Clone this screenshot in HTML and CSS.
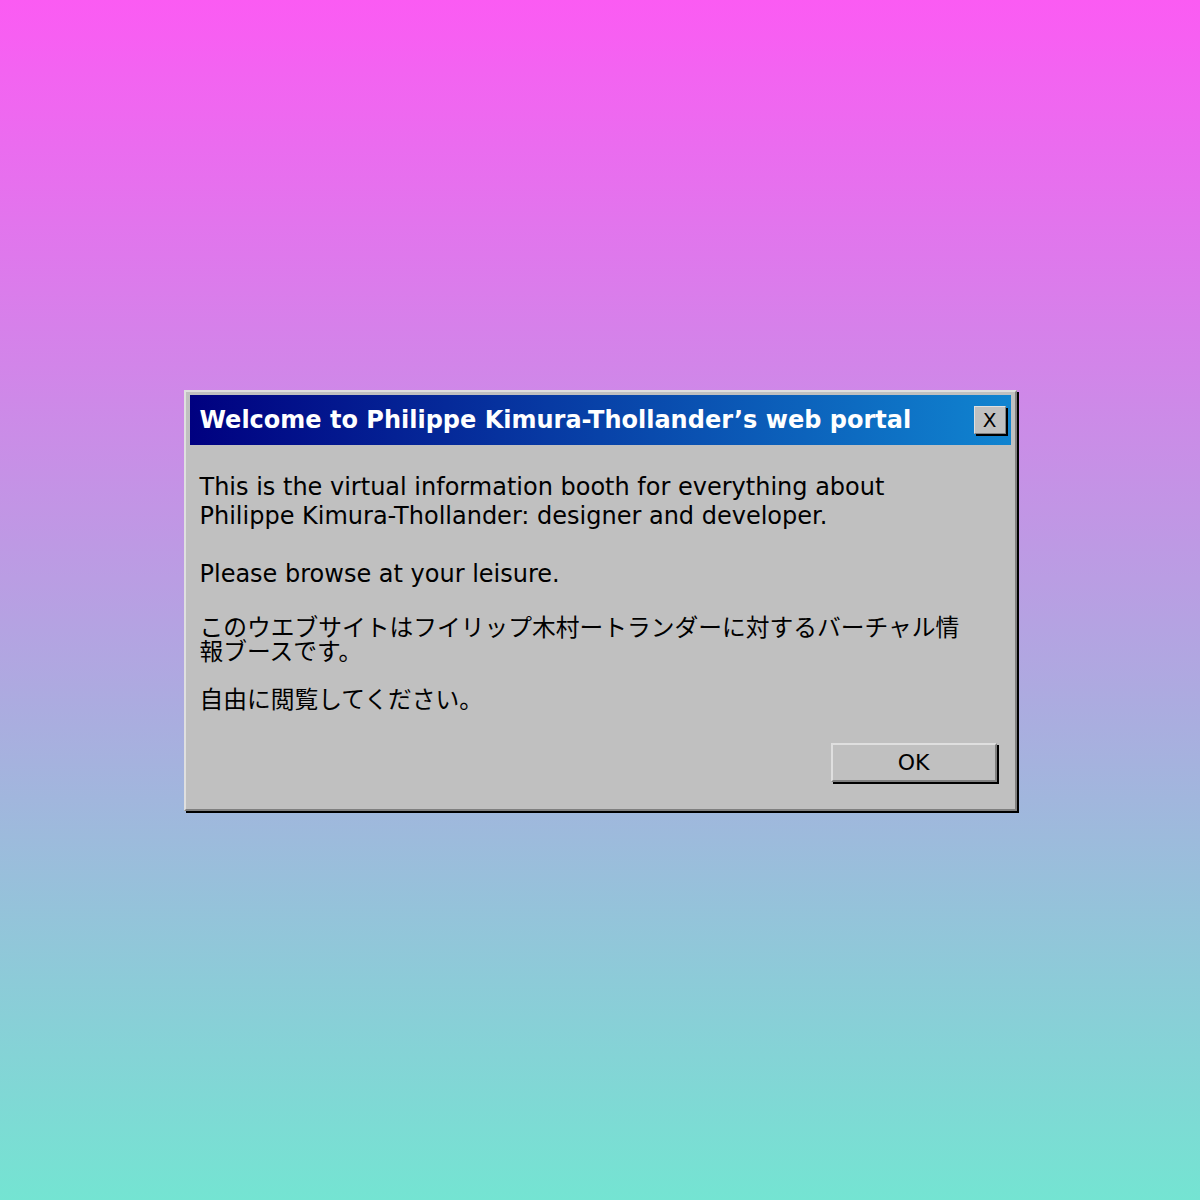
FILE: index.html
```html
<!DOCTYPE html>
<html lang="en">
<head>
<meta charset="utf-8">
<title>Philippe Kimura-Thollander</title>
<link rel="stylesheet" href="styles.css">
</head>
<body>
<div class="window">
  <div class="titlebar">
    <span class="title">Welcome to Philippe Kimura-Thollander’s web portal</span>
    <button class="close" type="button">X</button>
  </div>
  <div class="content">
    <p class="en">This is the virtual information booth for everything about Philippe Kimura-Thollander: designer and developer.</p>
    <p class="en en-last">Please browse at your leisure.</p>
    <p class="ja" lang="ja">このウエブサイトはフイリップ木村ートランダーに対するバーチャル情報ブースです。</p>
    <p class="ja ja-last" lang="ja">自由に閲覧してください。</p>
    <div class="actions">
      <button class="ok" type="button">OK</button>
    </div>
  </div>
</div>
</body>
</html>
```

FILE: styles.css
```css
html, body {
  margin: 0;
  padding: 0;
}
body {
  min-height: 1200px;
  display: flex;
  align-items: center;
  justify-content: center;
  background: linear-gradient(to bottom, #fb5bf3 0%, #74e4d2 100%);
  font-family: "DejaVu Sans", "Noto Sans CJK JP", sans-serif;
}
.window {
  width: 833px;
  box-sizing: border-box;
  background: #c0c0c0;
  border: 2px solid;
  border-color: #dfdfdf #808080 #808080 #dfdfdf;
  box-shadow: 2px 2px 0 #000;
  padding: 3px 4px 4px 4px;
}
.titlebar {
  height: 50px;
  box-sizing: border-box;
  display: flex;
  align-items: center;
  justify-content: space-between;
  padding: 0 5px 0 10px;
  background: linear-gradient(to right, #000080, #1084d0);
}
.title {
  color: #fff;
  font-weight: bold;
  font-size: 24px;
  white-space: nowrap;
}
.close {
  width: 32px;
  height: 28px;
  box-sizing: border-box;
  padding: 0;
  margin: 0;
  background: #c0c0c0;
  border: 1px solid;
  border-color: #dfdfdf #808080 #808080 #dfdfdf;
  box-shadow: 2px 2px 0 #000;
  font-family: "DejaVu Sans", sans-serif;
  font-size: 20px;
  line-height: 24px;
  color: #000;
}
.content {
  display: flex;
  flex-direction: column;
  padding: 28px 41px 23px 10px;
}
.content p {
  margin: 0;
  color: #000;
}
.en {
  font-size: 24px;
  line-height: 29px;
}
.content .en {
  margin-bottom: 29px;
}
.content .en-last {
  margin-bottom: 25px;
}
.ja {
  font-family: "Noto Sans CJK JP", sans-serif;
  font-size: 23.75px;
  line-height: 24px;
}
.content .ja {
  margin-bottom: 24px;
}
.content .ja-last {
  margin-bottom: 0;
}
.actions {
  display: flex;
  justify-content: flex-end;
  margin-top: 33px;
  margin-right: -27px;
}
.ok {
  width: 166px;
  height: 39px;
  box-sizing: border-box;
  margin: 0;
  padding: 0;
  background: #c0c0c0;
  border: 2px solid;
  border-color: #dfdfdf #808080 #808080 #dfdfdf;
  box-shadow: 2px 2px 0 #000;
  font-family: "DejaVu Sans", sans-serif;
  font-size: 22px;
  color: #000;
}
```
